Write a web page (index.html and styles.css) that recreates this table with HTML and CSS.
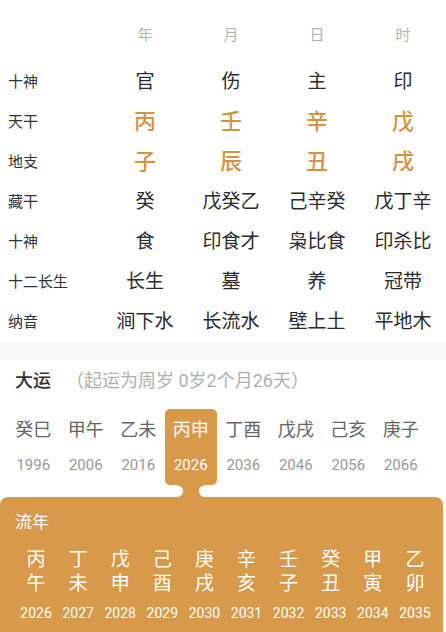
FILE: index.html
```html
<!DOCTYPE html>
<html lang="zh">
<head>
<meta charset="utf-8">
<link rel="stylesheet" href="styles.css">
</head>
<body>
<div class="pillars">
  <div class="head"></div>
  <div class="head">年</div>
  <div class="head">月</div>
  <div class="head">日</div>
  <div class="head">时</div>

  <div class="lbl">十神</div>
  <div class="val">官</div><div class="val">伤</div><div class="val">主</div><div class="val">印</div>

  <div class="lbl">天干</div>
  <div class="val gz">丙</div><div class="val gz">壬</div><div class="val gz">辛</div><div class="val gz">戊</div>

  <div class="lbl">地支</div>
  <div class="val gz">子</div><div class="val gz">辰</div><div class="val gz">丑</div><div class="val gz">戌</div>

  <div class="lbl">藏干</div>
  <div class="val">癸</div><div class="val">戊癸乙</div><div class="val">己辛癸</div><div class="val">戊丁辛</div>

  <div class="lbl">十神</div>
  <div class="val">食</div><div class="val">印食才</div><div class="val">枭比食</div><div class="val">印杀比</div>

  <div class="lbl">十二长生</div>
  <div class="val">长生</div><div class="val">墓</div><div class="val">养</div><div class="val">冠带</div>

  <div class="lbl">纳音</div>
  <div class="val">涧下水</div><div class="val">长流水</div><div class="val">壁上土</div><div class="val">平地木</div>
</div>

<div class="band"></div>

<section class="dayun">
  <div class="title"><span class="t">大运</span><span class="sub">（起运为周岁 0岁2个月26天）</span></div>
  <div class="dy-row">
    <div class="dy"><div class="s">癸巳</div><div class="y">1996</div></div>
    <div class="dy"><div class="s">甲午</div><div class="y">2006</div></div>
    <div class="dy"><div class="s">乙未</div><div class="y">2016</div></div>
    <div class="dy on"><div class="s">丙申</div><div class="y">2026</div>
      <svg class="neck" width="40" height="13" viewBox="0 0 40 13"><path d="M4,0 H36 Q28,0 28,6.5 Q28,13 40,13 H0 Q12,13 12,6.5 Q12,0 4,0 Z" fill="#d8994a"/></svg>
    </div>
    <div class="dy"><div class="s">丁酉</div><div class="y">2036</div></div>
    <div class="dy"><div class="s">戊戌</div><div class="y">2046</div></div>
    <div class="dy"><div class="s">己亥</div><div class="y">2056</div></div>
    <div class="dy"><div class="s">庚子</div><div class="y">2066</div></div>
  </div>
</section>

<section class="liunian">
  <div class="ln-title">流年</div>
  <div class="ln-row">
    <div class="ln"><div class="c">丙<br>午</div><div class="y">2026</div></div>
    <div class="ln"><div class="c">丁<br>未</div><div class="y">2027</div></div>
    <div class="ln"><div class="c">戊<br>申</div><div class="y">2028</div></div>
    <div class="ln"><div class="c">己<br>酉</div><div class="y">2029</div></div>
    <div class="ln"><div class="c">庚<br>戌</div><div class="y">2030</div></div>
    <div class="ln"><div class="c">辛<br>亥</div><div class="y">2031</div></div>
    <div class="ln"><div class="c">壬<br>子</div><div class="y">2032</div></div>
    <div class="ln"><div class="c">癸<br>丑</div><div class="y">2033</div></div>
    <div class="ln"><div class="c">甲<br>寅</div><div class="y">2034</div></div>
    <div class="ln"><div class="c">乙<br>卯</div><div class="y">2035</div></div>
  </div>
</section>
</body>
</html>
```

FILE: styles.css
```css
* { box-sizing: border-box; }
html, body { margin: 0; padding: 0; background: #fff; }
body {
  width: 446px;
  height: 632px;
  overflow: hidden;
  display: flex;
  flex-direction: column;
  font-family: "Roboto", "Noto Sans CJK SC", sans-serif;
  color: #333;
}

.pillars {
  display: grid;
  grid-template-columns: 102px repeat(4, 86px);
  grid-template-rows: 47px repeat(7, 40px);
  padding-top: 15px;
}
.pillars .head {
  font-size: 15px;
  color: #b3b3b3;
  text-align: center;
  line-height: 40px;
}
.pillars .lbl {
  font-size: 15px;
  line-height: 40px;
  padding-left: 8px;
  color: #333;
  white-space: nowrap;
}
.pillars .val {
  font-size: 19px;
  line-height: 40px;
  text-align: center;
  color: #2b2b2b;
  white-space: nowrap;
}
.pillars .val.gz {
  font-size: 22px;
  font-weight: 500;
  color: #d4943f;
}

.band {
  height: 18px;
  flex: none;
  background: #f8f8f8;
}

.dayun {
  padding-top: 9px;
  flex: none;
}
.title {
  display: flex;
  align-items: center;
  line-height: 24px;
  padding-left: 15px;
}
.title .t {
  font-size: 18px;
  font-weight: 500;
  color: #333;
}
.title .sub {
  font-size: 18px;
  color: #b0b0b0;
  margin-left: 15px;
}
.dy-row {
  display: grid;
  grid-template-columns: repeat(8, 52.5px);
  padding-left: 7px;
  margin-top: 16px;
}
.dy {
  text-align: center;
  padding: 8px 0 9px;
  border-radius: 5px;
  position: relative;
}
.dy .s {
  font-size: 18px;
  line-height: 26px;
  color: #666;
}
.dy .y {
  font-size: 15px;
  line-height: 22px;
  margin-top: 11px;
  color: #999;
}
.dy.on {
  background: #d8994a;
}
.dy.on .s, .dy.on .y { color: #fff; }
.neck {
  position: absolute;
  top: 100%;
  left: 50%;
  margin-left: -20px;
  display: block;
}

.liunian {
  margin-top: 12px;
  width: 443px;
  flex: 1;
  min-height: 0;
  background: #d8994a;
  border-radius: 8px 8px 0 0;
  color: #fff;
  padding-top: 13px;
}
.ln-title {
  font-size: 17px;
  line-height: 24px;
  padding-left: 15px;
}
.ln-row {
  display: grid;
  grid-template-columns: repeat(10, 42.1px);
  padding-left: 15px;
  margin-top: 14px;
}
.ln { text-align: center; }
.ln .c {
  font-size: 19px;
  line-height: 24px;
}
.ln .y {
  font-size: 14px;
  line-height: 22px;
  margin-top: 6px;
}
```
